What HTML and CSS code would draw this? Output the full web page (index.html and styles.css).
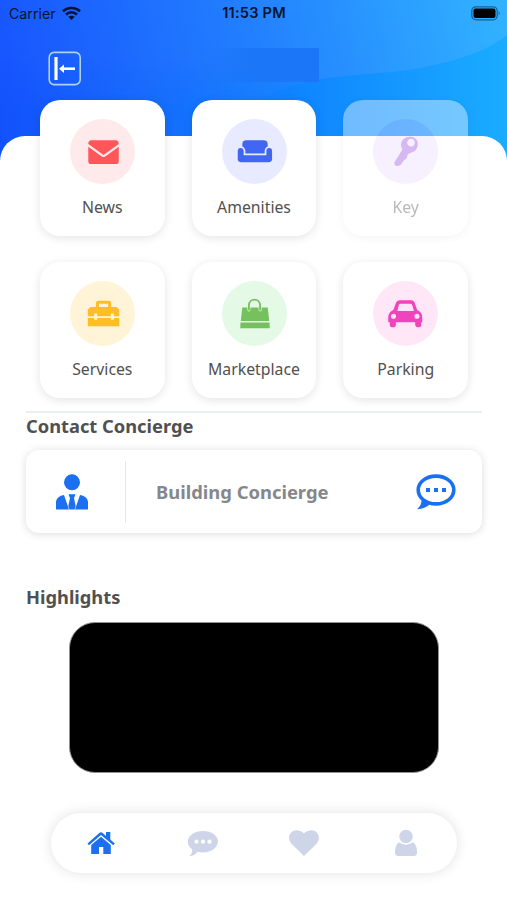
FILE: index.html
```html
<!DOCTYPE html>
<html lang="en">
<head>
<meta charset="utf-8">
<meta name="viewport" content="width=device-width, initial-scale=1">
<title>Home</title>
<link rel="stylesheet" href="styles.css">
</head>
<body>
<div class="screen">
  <svg class="backdrop" viewBox="0 0 507 170" preserveAspectRatio="none" aria-hidden="true">
    <defs>
      <linearGradient id="sky" gradientUnits="userSpaceOnUse" x1="20" y1="120" x2="500" y2="0">
        <stop offset="0" stop-color="#1856fe"/><stop offset=".5" stop-color="#2280fe"/><stop offset="1" stop-color="#31b2ff"/>
      </linearGradient>
      <linearGradient id="wave" gradientUnits="userSpaceOnUse" x1="0" y1="0" x2="507" y2="0">
        <stop offset="0" stop-color="#1252fc"/><stop offset=".25" stop-color="#1567fb"/><stop offset=".58" stop-color="#0f84ff"/><stop offset="1" stop-color="#1aacff"/>
      </linearGradient>
      <linearGradient id="fade" gradientUnits="userSpaceOnUse" x1="0" y1="60" x2="0" y2="115">
        <stop offset="0" stop-color="#000"/><stop offset="1" stop-color="#fff"/>
      </linearGradient>
      <mask id="soft" maskUnits="userSpaceOnUse" x="0" y="0" width="507" height="170"><rect width="507" height="170" fill="url(#fade)"/></mask>
    </defs>
    <rect width="507" height="170" fill="url(#sky)"/>
    <rect width="300" height="170" fill="url(#wave)" mask="url(#soft)"/>
    <path d="M264 98C310 70 370 79 430 66C465 58 488 50 507 35V170H264Z" fill="url(#wave)"/>
  </svg>

  <header class="status">
    <span class="carrier">Carrier
      <svg width="19" height="15" viewBox="0 0 19 15" fill="none" stroke="#07142e" stroke-width="2.5"><path d="M1 5.3C5.6.8 13.4.8 18 5.3M4 8.5c3.2-3 7.800-3 11 0"/><path d="M9.500 14L6.300 10.800c1.800-1.500 4.600-1.500 6.400 0z" fill="#07142e" stroke="none"/></svg>
    </span>
    <span class="clock">11:53 PM</span>
    <svg class="battery" width="30" height="15" viewBox="0 0 30 15"><rect x=".8" y=".8" width="25.400" height="13" rx="4" fill="none" stroke="#176099" stroke-width="1.200"/><rect x="2.500" y="2.500" width="22" height="9.500" rx="2" fill="#000"/><path d="M27.700 5.300q2 2 0 4z" fill="#176099"/></svg>
  </header>

  <div class="toolbar">
    <button class="back" aria-label="Back">
      <svg width="34" height="36" viewBox="0 0 34 36"><rect x="1.200" y="1.400" width="31" height="32.200" rx="5" fill="none" stroke="#b2d0ff" stroke-width="1.600"/><path d="M8 6v23" stroke="#fff" stroke-width="3.200"/><path d="M14 17.700h13" stroke="#fff" stroke-width="2.600"/><path d="M11 17.700l5-4.200v8.400z" fill="#fff"/></svg>
    </button>
    <div class="title-block"></div>
  </div>

  <main class="sheet">
    <section class="tiles">
      <a class="tile"><span class="disc news"><svg viewBox="0 0 64 64"><path d="M18 24.500Q18 21 21 21H45Q48 21 48 24.500L33 35.500 18 24.500Z"/><path d="M18 27.300L31.300 36.800Q33 38 34.700 36.800L48 27.300V41.500Q48 44.300 45 44.300H21Q18 44.300 18 41.500Z"/></svg></span><span class="label">News</span></a>
      <a class="tile"><span class="disc amenities"><svg viewBox="0 0 64 64"><path d="M20 27V25Q20 21 24 21H41Q45 21 45 25V27Q42 28.500 42 31.500V34H23V31.500Q23 28.500 20 27Z"/><path d="M15.500 31.500Q15.500 28.500 18.300 28.500T21.300 31.500V35.700H43.700V31.500Q43.700 28.500 46.500 28.500T49.300 31.500V39.500Q49.300 42.500 46.300 42.500H18.500Q15.500 42.500 15.500 39.500Z"/></svg></span><span class="label">Amenities</span></a>
      <a class="tile muted"><span class="disc key"><svg viewBox="0 0 64 64"><path fill-rule="evenodd" d="M35.500 17.500C43 16.500 46.500 24 42.500 30C40 33.500 36 32.500 34 35.500L33 39 30.500 40.500 28.500 43.500C26 48 19.500 46.500 21.500 42L29 30C25.500 24.500 28.500 18.500 35.500 17.500ZM37 19.500A3.800 3.800 0 1 0 40.500 25.500A3.800 3.800 0 0 0 37 19.500Z"/></svg></span><span class="label">Key</span></a>
      <a class="tile"><span class="disc services"><svg viewBox="0 0 64 64"><path fill-rule="evenodd" d="M25.500 25.500V22Q25.500 19.500 28 19.500H38Q40.500 19.500 40.500 22V25.500H46L48.500 28V34.800H43.200V32H40.200V34.800H26.800V32H23.800V34.800H17.500V28L20 25.500ZM28.500 22.500V25.500H37.500V22.500ZM17.500 36.500H23.800V38.200H26.800V36.500H40.200V38.200H43.200V36.500H48.500V44.500H17.500Z"/></svg></span><span class="label">Services</span></a>
      <a class="tile"><span class="disc market"><svg viewBox="0 0 64 64"><path d="M20 26H25V28Q25 30 26.500 30T28 28V26H36V28Q36 30 37.500 30T39 28V26H45L46.500 39.300H18.500Z"/><path d="M26.500 29V24C26.500 16.500 37.500 16.500 37.500 24V29" fill="none" stroke="#75c15d" stroke-width="1.800"/><path d="M18.200 40.800H46.800L47 46.500H18Z"/></svg></span><span class="label">Marketplace</span></a>
      <a class="tile"><span class="disc parking"><svg viewBox="0 0 64 64"><path fill-rule="evenodd" d="M20 28.500L22.500 22Q23.600 19 26.500 19H37.500Q40.200 19 41.200 22L43.500 28.500Q48.500 30.500 48.500 36V40.500H47.500V43Q47.500 45.500 44.700 45.500T41.500 43V40.500H22.500V43Q22.500 45.500 19.500 45.500T16.500 43V40.500H15V36Q15 30.500 20 28.500ZM24 29.500H40.300L38.500 23.500Q38.200 22.500 37 22.500H27Q25.800 22.500 25.500 23.500ZM20.200 32.200A2.500 2.500 0 1 0 20.200 37.200A2.500 2.500 0 1 0 20.200 32.200ZM43.300 32.200A2.500 2.500 0 1 0 43.300 37.200A2.500 2.500 0 1 0 43.300 32.200Z"/></svg></span><span class="label">Parking</span></a>
    </section>

    <section class="contact">
      <h2>Contact Concierge</h2>
      <a class="contact-card">
        <span class="person"><svg width="32" height="36" viewBox="0 0 32 36" fill="#1b70f2"><circle cx="16" cy="8.300" r="8"/><path d="M0 35.500V27.500Q1 22 8 21L13 35.500ZM32 35.500V27.500Q31 22 24 21L19 35.500Z"/><path d="M12.500 20.300H19.500L18 24.200 19.700 32 18.500 35.500H13.500L12.300 32 14 24.200Z"/></svg></span>
        <span class="name">Building Concierge</span>
        <svg class="chat" width="40" height="36" viewBox="0 0 40 36"><ellipse cx="20" cy="16" rx="17.800" ry="13.900" fill="#fff" stroke="#1b70f2" stroke-width="3.600"/><path d="M5.500 25Q6 31 1 35.300Q10 34.500 14.500 29.500Z" fill="#1b70f2"/><path d="M10 14h4v4h-4zM18 14h4v4h-4zM26 14h4v4h-4z" fill="#1b70f2"/></svg>
      </a>
    </section>

    <section class="highlights">
      <h2>Highlights</h2>
      <div class="banner"></div>
    </section>

    <nav class="tabs">
      <a class="tab active"><svg width="28" height="24" viewBox="0 0 28 24"><path d="M.5 12.500L12.300 2Q14 .5 15.700 2L19 5V1H23.300V8.500L27.800 12.500 26.300 14.200 14 3.900 2 14.200Z"/><path d="M4.200 14L14 5.700 23.800 14V23H16.300V16H12V23H4.200Z"/></svg></a>
      <a class="tab"><svg width="32" height="28" viewBox="0 0 32 28"><path d="M16 2C24.500 2 31 6.800 31 12.500S24.500 23.500 16 23.500Q13 23.500 10.500 22.700Q8 26.500 2.500 27.300Q5.500 24.500 5.200 20.500Q.8 17 .8 12.500C.8 6.800 7.500 2 16 2Z"/><g fill="#fff"><circle cx="9.500" cy="12.700" r="2.100"/><circle cx="16" cy="12.700" r="2.100"/><circle cx="22.500" cy="12.700" r="2.100"/></g></svg></a>
      <a class="tab"><svg width="32" height="28" viewBox="0 0 32 28"><path d="M16 27L3.300 14.500C-3.500 6.500 6.500-4 16 4.300C25.500-4 35.500 6.500 28.700 14.500Z"/></svg></a>
      <a class="tab"><svg width="24" height="28" viewBox="0 0 24 28"><circle cx="12" cy="7.500" r="6.700"/><path d="M5 13.300Q12 18 19 13.300Q23 16 23 23Q23 27 20 27H4Q1 27 1 23Q1 16 5 13.300Z"/></svg></a>
    </nav>
  </main>
</div>
</body>
</html>
```
FILE: styles.css
```css
* { box-sizing: border-box; }
body { margin: 0; background: #fff; font-family: "Noto Sans", sans-serif; color: #505050; }
.screen { position: relative; height: 900px; overflow: hidden; isolation: isolate; }
.backdrop { position: absolute; z-index: -1; top: 0; left: 0; width: 507px; height: 170px; }

.status {
  height: 28px; padding: 0 6px 2px 9px;
  display: grid; grid-template-columns: 1fr auto 1fr; align-items: center;
  font-family: Inter, sans-serif; font-size: 14px; color: #07142e;
}
.carrier { display: flex; align-items: center; gap: 6px; font-size: 14.2px; }
.clock { font-size: 14.600px; font-weight: 600; letter-spacing: .2px; margin-left: -2px; }
.battery { justify-self: end; }

.toolbar { height: 108px; padding: 20px 0 0 48px; display: flex; align-items: flex-start; }
.back { margin-top: 3px; padding: 0; border: 0; background: none; width: 34px; height: 36px; }
.back svg { display: block; }
.title-block { width: 124px; height: 34px; margin-left: 113px; background: linear-gradient(90deg, #1b76f800, #1b76f8 50%); }

.sheet { display: flow-root; height: 764px; background: #fff; border-radius: 25px 25px 0 0; }
.tiles {
  display: grid; grid-template-columns: repeat(3, 124.600px); grid-auto-rows: 136px;
  gap: 26.400px 27.100px; justify-content: center;
  margin: -36px 0 0 1px;
}
.tile {
  display: flex; flex-direction: column; align-items: center; padding-top: 18.500px;
  background: #fff; border-radius: 20px; box-shadow: 0 2px 10px rgba(0, 0, 0, .11);
}
.muted { opacity: .4; }
.disc { width: 65px; height: 65px; border-radius: 50%; }
.disc svg { display: block; width: 65px; height: 65px; }
.label { margin-top: 11px; font-size: 15.800px; line-height: 24px; }
.news { background: #ffeaeb; fill: #ff5659; }
.amenities { background: #e8ebff; fill: #4266f4; }
.key { background: #eadcff; fill: #9b51e0; }
.services { background: #fff4d8; fill: #ffbe22; }
.market { background: #e5f9e7; fill: #75c15d; }
.parking { background: #ffe7f8; fill: #f044bd; }

h2 { margin: 0; font-size: 18.300px; line-height: 26px; font-weight: 700; }
.contact { margin: 13px 25px 0 26px; border-top: 2px solid #eceff1; }
.contact-card {
  margin-top: 11px; height: 83px; display: flex; align-items: center;
  background: #fff; border-radius: 13px; box-shadow: 0 1px 9px rgba(0, 0, 0, .14);
}
.person { width: 100px; height: 62px; padding-right: 8px; display: flex; align-items: center; justify-content: center; border-right: 1.500px solid #e5e7e9; }
.name { flex: 1; margin-left: 30px; font-size: 18.400px; font-weight: 700; color: #85878b; }
.chat { margin-right: 26px; }

.highlights { margin: 51px 26px 0; }
.banner { width: 370px; height: 151px; margin: 12px auto 0; background: #000; border: 1px solid #929292; border-radius: 26px; }

.tabs {
  width: 406px; height: 60px; margin: 40px auto 0; display: grid; grid-template-columns: repeat(4, 1fr);
  background: #fff; border-radius: 30px; box-shadow: 0 0 13px rgba(0, 0, 0, .12);
}
.tab { display: flex; align-items: center; justify-content: center; fill: #cfd5e8; }
.active { fill: #1b70f2; }
```
